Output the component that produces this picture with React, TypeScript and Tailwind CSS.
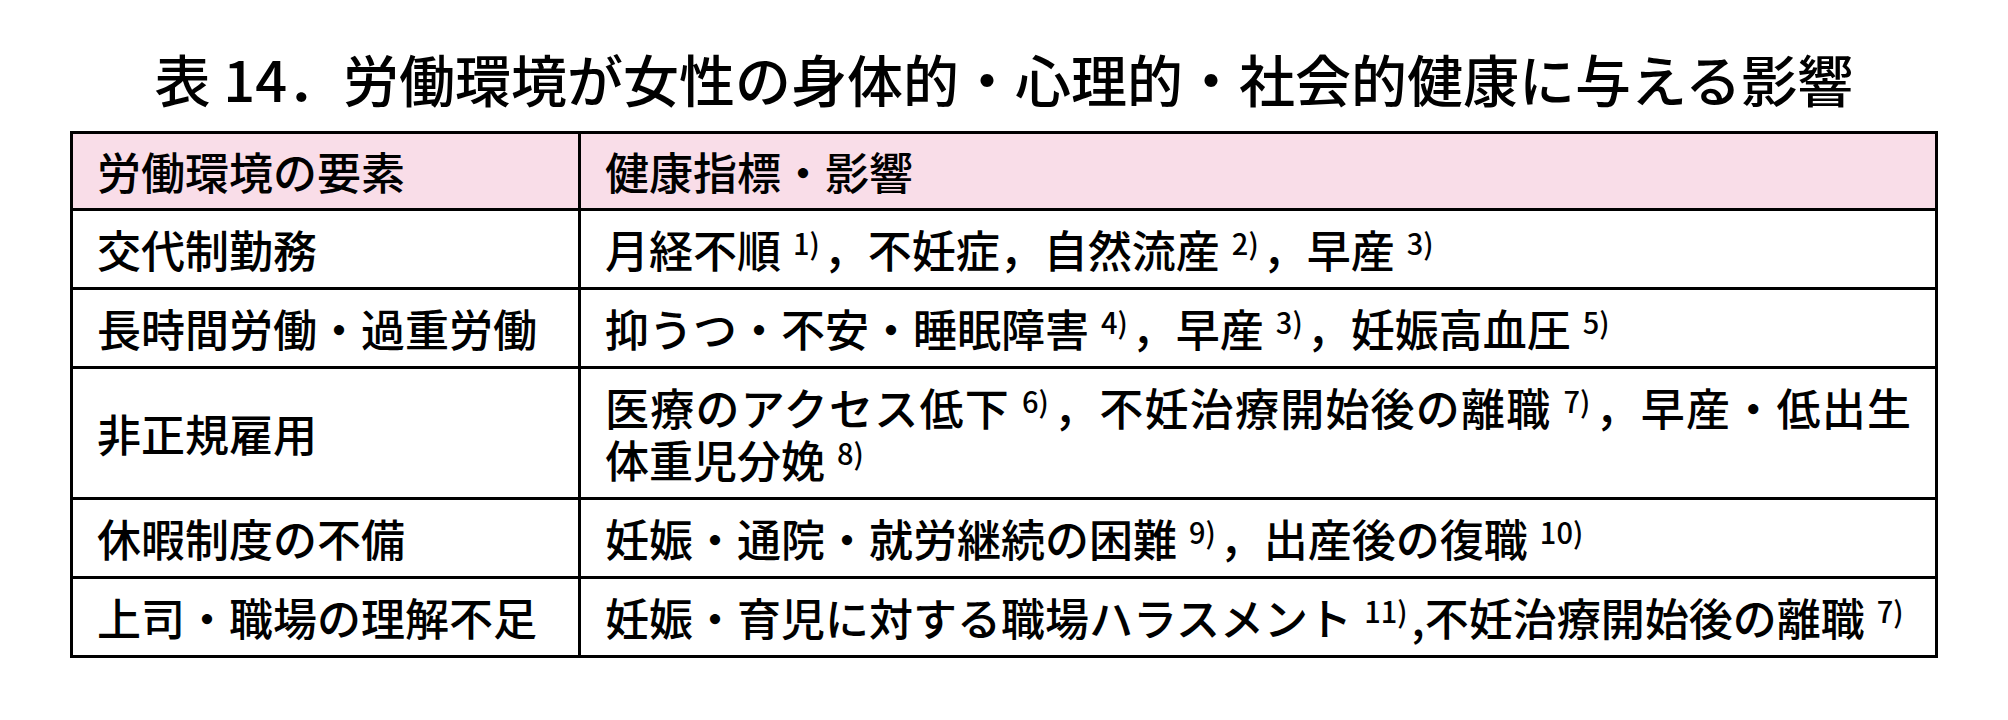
const rows: { factor: string; effects: React.ReactNode }[] = [
  {
    factor: "交代制勤務",
    effects: (
      <>
        月経不順<Ref n="1" />，不妊症，自然流産<Ref n="2" />，早産<Ref n="3" />
      </>
    ),
  },
  {
    factor: "長時間労働・過重労働",
    effects: (
      <>
        抑うつ・不安・睡眠障害<Ref n="4" />，早産<Ref n="3" />，妊娠高血圧<Ref n="5" />
      </>
    ),
  },
  {
    factor: "非正規雇用",
    effects: (
      <>
        <span className="block text-justify [text-align-last:justify]">
          医療のアクセス低下<Ref n="6" />，不妊治療開始後の離職<Ref n="7" />，早産・低出生
        </span>
        <span className="block">
          体重児分娩<Ref n="8" />
        </span>
      </>
    ),
  },
  {
    factor: "休暇制度の不備",
    effects: (
      <>
        妊娠・通院・就労継続の困難<Ref n="9" />，出産後の復職<Ref n="10" />
      </>
    ),
  },
  {
    factor: "上司・職場の理解不足",
    effects: (
      <>
        妊娠・育児に対する職場ハラスメント<Ref n="11" />,不妊治療開始後の離職<Ref n="7" />
      </>
    ),
  },
];

function Ref({ n }: { n: string }) {
  return (
    <span className="relative -top-[13px] ml-[12px] mr-[4px] text-[29px] leading-none">
      {n})
    </span>
  );
}

export default function App() {
  return (
    <div
      className="w-[2008px] h-[720px] bg-white text-black pt-[44px]"
      style={{ fontFamily: '"Noto Sans CJK JP", "Noto Sans", sans-serif' }}
    >
      <h1 className="text-center text-[56px] leading-[68px] font-medium">
        表 14．労働環境が女性の身体的・心理的・社会的健康に与える影響
      </h1>
      <table className="mx-auto mt-[19px] w-[1868px] border-collapse border-[3px] border-black text-[44px] font-medium">
        <thead>
          <tr className="bg-[#f9dde8]">
            <th className="w-[508px] border-[3px] border-black px-[24px] py-[11px] text-left font-medium leading-[52px]">
              労働環境の要素
            </th>
            <th className="border-[3px] border-black px-[24px] py-[11px] text-left font-medium leading-[52px]">
              健康指標・影響
            </th>
          </tr>
        </thead>
        <tbody>
          {rows.map((row, i) => (
            <tr key={i}>
              <td className="border-[3px] border-black px-[24px] py-[12px] leading-[52px]">
                {row.factor}
              </td>
              <td className="border-[3px] border-black px-[24px] py-[12px] leading-[52px]">
                {row.effects}
              </td>
            </tr>
          ))}
        </tbody>
      </table>
    </div>
  );
}
